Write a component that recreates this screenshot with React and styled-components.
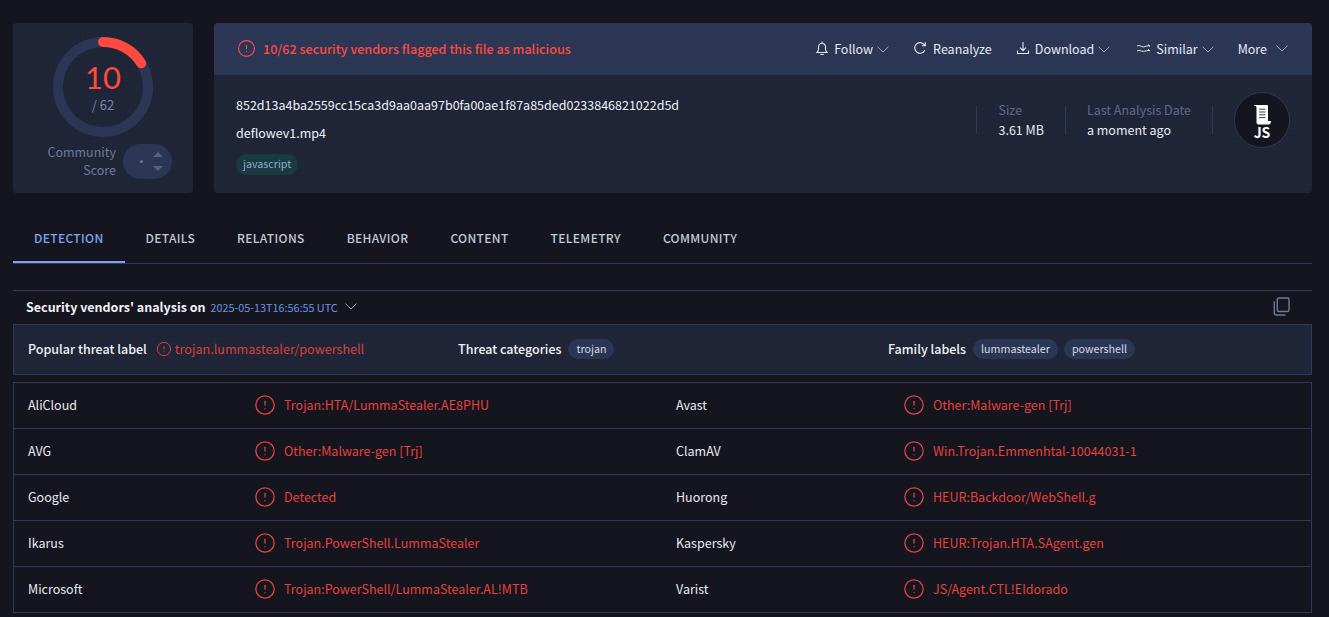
import React from 'react'
import styled, { createGlobalStyle } from 'styled-components'
import { CircleAlert } from 'lucide-react'

const Global = createGlobalStyle`
html, body {
  margin: 0;
  height: 617px;
  overflow: hidden;
  background: #15151f;
  font-family: "Noto Sans CJK JP", "Noto Sans", sans-serif;
  font-size: 12.5px;
  color: #e8eaf2;
}
`

const dots = `radial-gradient(rgba(120,140,180,0.05) 0.6px, transparent 0.8px)`

const tabs = ['Detection', 'Details', 'Relations', 'Behavior', 'Content', 'Telemetry', 'Community']

const vendors = [
  ['AliCloud', 'Trojan:HTA/LummaStealer.AE8PHU', 'Avast', 'Other:Malware-gen [Trj]'],
  ['AVG', 'Other:Malware-gen [Trj]', 'ClamAV', 'Win.Trojan.Emmenhtal-10044031-1'],
  ['Google', 'Detected', 'Huorong', 'HEUR:Backdoor/WebShell.g'],
  ['Ikarus', 'Trojan.PowerShell.LummaStealer', 'Kaspersky', 'HEUR:Trojan.HTA.SAgent.gen'],
  ['Microsoft', 'Trojan:PowerShell/LummaStealer.AL!MTB', 'Varist', 'JS/Agent.CTL!Eldorado'],
]

const Chevron = () => (
  <svg width="12" height="7" viewBox="0 0 12 7" fill="none" stroke="#aeb6ca" strokeWidth="0.9">
    <path d="M.5.7 6 6 11.500.7" />
  </svg>
)

const BellIcon = () => (
  <svg width="14" height="15" viewBox="0 0 14 15" fill="none" stroke="currentColor" strokeWidth="1.100">
    <path d="M2 11.500h10c-1-1-1.500-1.800-1.500-3.500V6.200C10.500 3.900 9 2.300 7 2.300S3.500 3.900 3.500 6.200V8C3.500 9.700 3 10.500 2 11.500z" />
    <path d="M7 .6v1.700M5.200 13.500h3.600" />
  </svg>
)

const ReloadIcon = () => (
  <svg width="14" height="14" viewBox="0 0 14 14" fill="none" stroke="currentColor" strokeWidth="1.100">
    <path d="M11.800 9.300A5.300 5.300 0 1 1 10.600 3L12 4.500" />
    <path d="M12.300 1.300v3.400H9" />
  </svg>
)

const DownloadIcon = () => (
  <svg width="14" height="14" viewBox="0 0 14 14" fill="none" stroke="currentColor" strokeWidth="1.100">
    <path d="M7 1v8.500M4 6.700 7 9.700l3-3M1.500 9.500v3h11v-3" />
  </svg>
)

const SimilarIcon = () => (
  <svg width="15" height="14" viewBox="0 0 15 14" fill="none" stroke="currentColor" strokeWidth="1">
    <path d="M1 5c2.500-1.500 4 .9 6.300.9 2.300 0 3.500-1.700 6.700-.9M12 3.700l1.800 1.300" />
    <path d="M1 10c2.500-1.500 4 .4 6.300.4 2.300 0 3.500-1.400 6.700-.7M12 8.400l1.800 1.300" />
  </svg>
)

const ScrollIcon = () => (
  <svg width="17" height="20" viewBox="0 0 17 20">
    <path d="M0 0H13.200c.5 0 .8.300.8.800V16h3c0 1.800-.8 3.500-2.300 3.500H4.500C3.200 19.500 2.500 18.500 2.500 17V2.500C2.500 1.200 1.500 .8 0 .8z" fill="#fff" />
    <path d="M5 4.200h6.500M5 7h6.500M5 9.800h6.500M5 12.600h6.500" stroke="#3b3f50" strokeWidth="1" />
  </svg>
)

const CopyIcon = () => (
  <svg width="17" height="19" viewBox="0 0 17 19" fill="none" stroke="#6f7a97" strokeWidth="1.400">
    <rect x="4.300" y="1" width="11.700" height="13.500" rx="1.500" />
    <path d="M1.300 4.200v12.100c0 1 .6 1.700 1.700 1.700h9.500" />
  </svg>
)

const App = () => {
  return (
    <Page>
      <Global />
      <Top>
        <ScoreCard>
          <Ring>
            <svg width="100" height="100" viewBox="0 0 100 100">
              <circle cx="50" cy="50" r="45" fill="none" stroke="#2b3554" strokeWidth="10" />
              <circle
                cx="50" cy="50" r="45" fill="none" stroke="#ff4a3f" strokeWidth="10" strokeLinecap="round"
                strokeDasharray="45.600 300" transform="rotate(-90 50 50)"
              />
            </svg>
            <RingText>
              <Positives>10</Positives>
              <Total>/ 62</Total>
            </RingText>
          </Ring>
          <CommunityRow>
            <CommunityLabel>Community<br />Score</CommunityLabel>
            <ScorePill>
              <ScoreDot />
              <Arrows>
                <ArrowUp />
                <ArrowDown />
              </Arrows>
            </ScorePill>
          </CommunityRow>
        </ScoreCard>

        <InfoCard>
          <InfoHeader>
            <Verdict>
              <CircleAlert size={19} strokeWidth={1.400} />
              <span>10/62 security vendors flagged this file as malicious</span>
            </Verdict>
            <Actions>
              <Action><BellIcon />Follow<Chevron /></Action>
              <ReanalyzeAction><ReloadIcon />Reanalyze</ReanalyzeAction>
              <Action><DownloadIcon />Download<Chevron /></Action>
              <SimilarAction><SimilarIcon />Similar<Chevron /></SimilarAction>
              <MoreAction>More<Chevron /></MoreAction>
            </Actions>
          </InfoHeader>
          <InfoBody>
            <FileInfo>
              <Hash>852d13a4ba2559cc15ca3d9aa0aa97b0fa00ae1f87a85ded0233846821022d5d</Hash>
              <FileName>deflowev1.mp4</FileName>
              <FileTag>javascript</FileTag>
            </FileInfo>
            <Stats>
              <Stat>
                <StatLabel>Size</StatLabel>
                <StatValue>3.61 MB</StatValue>
              </Stat>
              <Stat>
                <StatLabel>Last Analysis Date</StatLabel>
                <StatValue>a moment ago</StatValue>
              </Stat>
              <StatEnd />
              <FileBadge>
                <ScrollIcon />
                <BadgeText>JS</BadgeText>
              </FileBadge>
            </Stats>
          </InfoBody>
        </InfoCard>
      </Top>

      <TabBar>
        {tabs.map((t, i) => <Tab key={t} $active={i === 0}>{t}</Tab>)}
      </TabBar>

      <AnalysisHead>
        <AnalysisTitle>Security vendors' analysis on</AnalysisTitle>
        <AnalysisDate>2025-05-13T16:56:55 UTC</AnalysisDate>
        <Chevron />
        <CopyWrap><CopyIcon /></CopyWrap>
      </AnalysisHead>

      <LabelsBand>
        <LabelGroup $w="430px">
          <LabelTitle>Popular threat label</LabelTitle>
          <ThreatValue><CircleAlert size={16} strokeWidth={1.500} />trojan.lummastealer/powershell</ThreatValue>
        </LabelGroup>
        <LabelGroup $w="430px">
          <LabelTitle>Threat categories</LabelTitle>
          <Chip>trojan</Chip>
        </LabelGroup>
        <LabelGroup>
          <LabelTitle>Family labels</LabelTitle>
          <Chip>lummastealer</Chip>
          <Chip>powershell</Chip>
        </LabelGroup>
      </LabelsBand>

      <VendorTable>
        {vendors.map(row => (
          <VendorRow key={row[0]}>
            <VendorName>{row[0]}</VendorName>
            <Result><CircleAlert size={22} strokeWidth={1.400} /><span>{row[1]}</span></Result>
            <VendorName>{row[2]}</VendorName>
            <Result><CircleAlert size={22} strokeWidth={1.400} /><span>{row[3]}</span></Result>
          </VendorRow>
        ))}
      </VendorTable>
    </Page>
  )
}

const Page = styled.div`
width: 1299px;
padding: 23px 17px 0 13px;
`
const Top = styled.div`
display: flex;
gap: 21px;
height: 170px;
`
const ScoreCard = styled.div`
display: flex;
flex-direction: column;
align-items: center;
width: 180px;
box-sizing: border-box;
padding-top: 14px;
border-radius: 4px;
background-color: #1f2437;
background-image: ${dots};
background-size: 4px 4px;
`
const Ring = styled.div`
position: relative;
width: 100px;
height: 100px;
svg { display: block; }
`
const RingText = styled.div`
position: absolute;
inset: 0;
display: flex;
flex-direction: column;
align-items: center;
padding-top: 24px;
`
const Positives = styled.div`
font-family: Lato, "Noto Sans", sans-serif;
font-size: 31px;
line-height: 32px;
color: #ff4a3f;
`
const Total = styled.div`
font-size: 13px;
line-height: 18px;
margin-top: 3px;
color: #7b86a3;
`
const CommunityRow = styled.div`
display: flex;
align-items: center;
align-self: flex-start;
gap: 7px;
margin-top: 6px;
margin-left: 29px;
`
const CommunityLabel = styled.div`
width: 74px;
text-align: right;
font-size: 12.5px;
line-height: 18px;
color: #6f7a97;
`
const ScorePill = styled.div`
display: flex;
align-items: center;
justify-content: space-between;
box-sizing: border-box;
width: 49px;
height: 35px;
margin-top: 1px;
padding: 0 9px 0 17px;
border-radius: 18px;
background: #2b3554;
`
const ScoreDot = styled.span`
width: 3px;
height: 3px;
border-radius: 50%;
background: #6f7a97;
`
const Arrows = styled.div`
display: flex;
flex-direction: column;
gap: 9px;
`
const ArrowUp = styled.span`
width: 0;
height: 0;
border-left: 5px solid transparent;
border-right: 5px solid transparent;
border-bottom: 5px solid #55617e;
`
const ArrowDown = styled.span`
width: 0;
height: 0;
border-left: 5px solid transparent;
border-right: 5px solid transparent;
border-top: 5px solid #55617e;
`
const InfoCard = styled.div`
flex: 1;
display: flex;
flex-direction: column;
border-radius: 4px;
overflow: hidden;
background-color: #1f2437;
background-image: ${dots};
background-size: 4px 4px;
`
const InfoHeader = styled.div`
display: flex;
align-items: center;
justify-content: space-between;
box-sizing: border-box;
height: 52px;
padding: 0 24px 2px 23px;
background-color: #2b3554;
background-image: ${dots};
background-size: 4px 4px;
`
const Verdict = styled.div`
display: flex;
align-items: center;
gap: 7px;
color: #ff4a3f;
font-size: 12.6px;
font-weight: 500;
`
const Actions = styled.div`
display: flex;
align-items: center;
gap: 24px;
`
const Action = styled.div`
display: flex;
align-items: center;
gap: 5px;
font-size: 12.5px;
color: #e8eaf2;
> svg:last-child:not(:first-child) { margin-left: -1px; margin-top: 2px; }
`
const ReanalyzeAction = styled(Action)`
gap: 6px;
`
const SimilarAction = styled(Action)`
margin-left: 2px;
`
const MoreAction = styled(Action)`
gap: 9px;
> svg:last-child:not(:first-child) { margin-left: 0; }
`
const InfoBody = styled.div`
flex: 1;
display: flex;
justify-content: space-between;
padding: 20px 22px 0 22px;
`
const FileInfo = styled.div`
display: flex;
flex-direction: column;
align-items: flex-start;
`
const Hash = styled.div`
font-size: 12.5px;
line-height: 20px;
color: #f0f1f6;
`
const FileName = styled.div`
font-size: 12.5px;
line-height: 20px;
margin-top: 8px;
color: #f0f1f6;
`
const FileTag = styled.span`
margin-top: 11px;
padding: 0 7px;
height: 21px;
line-height: 20px;
border-radius: 11px;
font-size: 10.7px;
color: #8fa8cf;
background: #1a3a42;
`
const Stats = styled.div`
display: flex;
align-items: flex-start;
margin-top: -2px;
`
const Stat = styled.div`
display: flex;
flex-direction: column;
gap: 2px;
padding: 0 21px;
border-left: 1px solid #2f3a58;
height: 28px;
margin-top: 13px;
`
const StatLabel = styled.div`
font-size: 12.5px;
line-height: 18px;
margin-top: -5px;
color: #5f6a87;
white-space: nowrap;
`
const StatValue = styled.div`
font-size: 12.5px;
line-height: 18px;
color: #e8eaf2;
white-space: nowrap;
`
const StatEnd = styled.div`
width: 1px;
height: 28px;
margin-top: 13px;
background: #2f3a58;
`
const FileBadge = styled.div`
display: flex;
flex-direction: column;
align-items: center;
justify-content: center;
box-sizing: border-box;
width: 56px;
height: 56px;
margin-left: 21px;
margin-top: -1px;
padding-top: 3px;
border-radius: 50%;
border: 1px solid #2f3a58;
background: #15151f;
`
const BadgeText = styled.div`
font-size: 14px;
font-weight: 700;
line-height: 14px;
color: #fff;
`
const TabBar = styled.div`
display: flex;
box-sizing: border-box;
height: 50px;
margin-top: 21px;
margin-bottom: 26px;
border-bottom: 1px solid #2f3a58;
`
const Tab = styled.div`
display: flex;
align-items: center;
justify-content: center;
padding: 0 21px 2px;
font-size: 12px;
font-weight: 500;
letter-spacing: 0.33px;
text-transform: uppercase;
color: ${props => props.$active ? '#7ea4ee' : '#c3c8d6'};
box-shadow: ${props => props.$active ? 'inset 0 -2px 0 #7ea4ee' : 'none'};
`
const AnalysisHead = styled.div`
display: flex;
align-items: center;
gap: 5px;
height: 34px;
padding: 0 13px 2px;
border-top: 1px solid #2f3a58;
box-sizing: border-box;
`
const AnalysisTitle = styled.div`
font-size: 12.5px;
font-weight: 700;
color: #f0f1f6;
`
const AnalysisDate = styled.div`
font-size: 10.8px;
margin-right: 2px;
color: #6b93e0;
`
const CopyWrap = styled.div`
display: flex;
margin-left: auto;
margin-right: 9px;
`
const LabelsBand = styled.div`
display: flex;
align-items: center;
box-sizing: border-box;
height: 51px;
padding: 0 14px 2px;
border: 1px solid #2f3a58;
background-color: #1f2437;
background-image: ${dots};
background-size: 4px 4px;
`
const LabelGroup = styled.div`
display: flex;
align-items: center;
gap: 7px;
width: ${props => props.$w || 'auto'};
`
const LabelTitle = styled.div`
font-size: 12.5px;
font-weight: 500;
color: #f0f1f6;
`
const ThreatValue = styled.div`
display: flex;
align-items: center;
gap: 3px;
margin-left: 2px;
font-size: 12.6px;
color: #d9403a;
`
const Chip = styled.span`
padding: 0 8px;
height: 20px;
line-height: 19px;
border-radius: 10px;
font-size: 10.7px;
color: #d7dbe6;
background: #2b3554;
& + & { margin-left: -1px; }
`
const VendorTable = styled.div`
margin-top: 7px;
border: 1px solid #2f3a58;
border-bottom: none;
`
const VendorRow = styled.div`
display: grid;
grid-template-columns: 228px 420px 229px 1fr;
align-items: center;
box-sizing: border-box;
height: 46px;
padding: 0 0 2px 14px;
border-bottom: 1px solid #2f3a58;
`
const VendorName = styled.div`
font-size: 12.5px;
color: #e8eaf2;
`
const Result = styled.div`
display: flex;
align-items: center;
gap: 8px;
margin-left: -2px;
font-size: 12.5px;
color: #e4423b;
svg { flex: none; }
`

export default App
